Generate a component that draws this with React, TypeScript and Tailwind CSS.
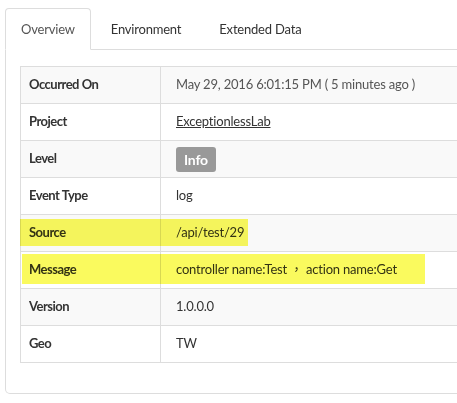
import React from "react"

const rows = [
  { label: "Occurred On", value: <span className="text-[#555]">May 29, 2016 6:01:15 PM ( 5 minutes ago )</span> },
  { label: "Project", value: <a className="text-[#333] underline">ExceptionlessLab</a> },
  {
    label: "Level",
    value: (
      <span className="inline-block rounded-[3px] bg-[#999] px-[8px] py-[3px] text-[14px] font-bold leading-[19px] text-white">
        Info
      </span>
    ),
  },
  { label: "Event Type", value: "log" },
  { label: "Source", value: "/api/test/29" },
  { label: "Message", value: "controller name:Test ， action name:Get" },
  { label: "Version", value: "1.0.0.0" },
  { label: "Geo", value: "TW" },
]

const tabs = ["Overview", "Environment", "Extended Data"]

export default function App() {
  return (
    <div
      className="h-[403px] w-[457px] overflow-hidden bg-white text-[13px] tracking-[-0.2px] text-[#333]"
      style={{ fontFamily: "Lato, 'Noto Sans CJK TC', sans-serif" }}
    >
      <div className="w-[480px] pl-[5px] pt-[8px]">
        <ul className="flex border-b border-[#ddd]">
          {tabs.map((t, i) => (
            <li key={t} className="-mb-px mr-[2px]">
              <div
                className={
                  i === 0
                    ? "rounded-t-[4px] border border-[#ddd] border-b-transparent bg-white px-[15px] py-[10px] leading-[20px] text-[#555]"
                    : "border border-transparent px-[17px] py-[10px] leading-[20px] text-[#333]"
                }
              >
                {t}
              </div>
            </li>
          ))}
        </ul>

        <div className="rounded-b-[5px] border border-t-0 border-[#ddd] px-[14px] pb-[30px] pt-[16px]">
          <div className="relative">
            <table className="w-full border-collapse border border-[#ddd]">
              <tbody>
                {rows.map((r, i) => (
                  <tr key={r.label} className={i % 2 === 0 ? "bg-[#f9f9f9]" : "bg-white"}>
                    <th className="h-[37px] w-[140px] border border-[#ddd] px-[8px] text-left font-bold tracking-[-0.5px]">
                      {r.label}
                    </th>
                    <td className="h-[37px] border border-[#ddd] px-[15px]">{r.value}</td>
                  </tr>
                ))}
              </tbody>
            </table>

            {/* marker highlights */}
            <div className="pointer-events-none absolute left-0 top-[153px] h-[27px] w-[228px] bg-[#fafa5e] mix-blend-multiply" />
            <div className="pointer-events-none absolute left-[2px] top-[188px] h-[30px] w-[403px] bg-[#fafa5e] mix-blend-multiply" />
          </div>
        </div>
      </div>
    </div>
  )
}
